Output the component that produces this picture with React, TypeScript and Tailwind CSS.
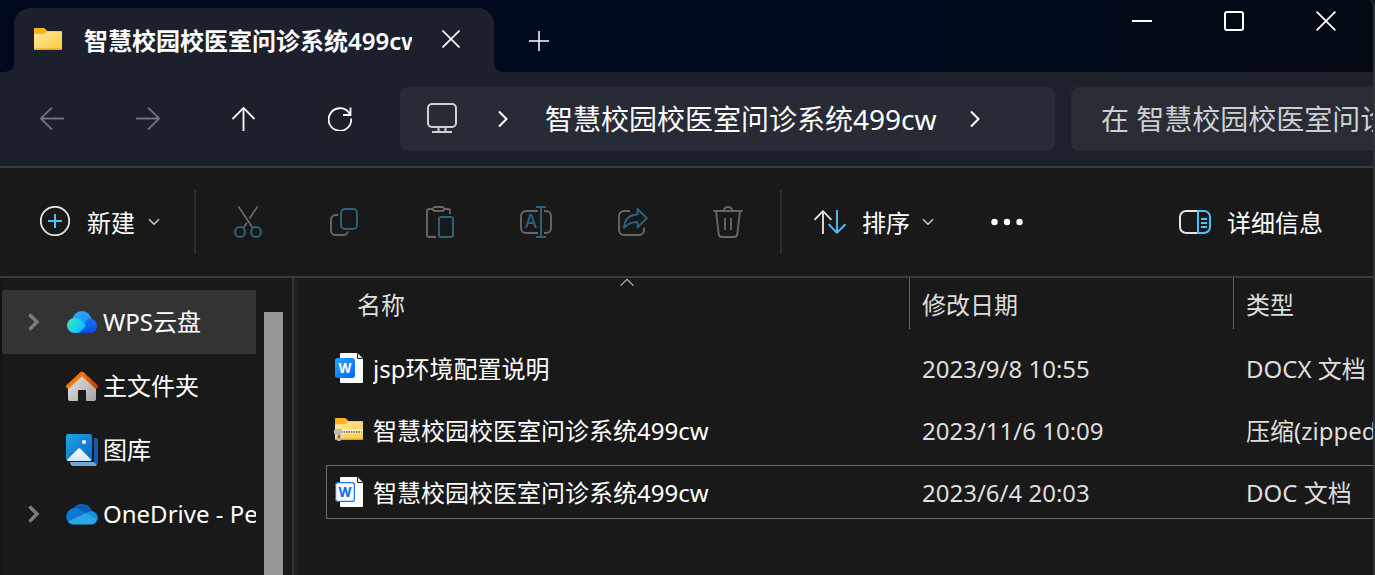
import type { ReactNode } from 'react';

type FileKind = 'docx' | 'zip' | 'doc';

interface FileItem {
  id: number;
  kind: FileKind;
  name: string;
  modified: string;
  type: string;
  focused?: boolean;
}

const files: FileItem[] = [
  { id: 1, kind: 'docx', name: 'jsp环境配置说明', modified: '2023/9/8 10:55', type: 'DOCX 文档' },
  { id: 2, kind: 'zip', name: '智慧校园校医室问诊系统499cw', modified: '2023/11/6 10:09', type: '压缩(zipped)文件夹' },
  { id: 3, kind: 'doc', name: '智慧校园校医室问诊系统499cw', modified: '2023/6/4 20:03', type: 'DOC 文档', focused: true },
];

const GRAY = '#676767';
const DIM_BLUE = '#2b6280';
const BLUE = '#4cc2ff';

function Chevron({ dir, className }: { dir: 'right' | 'down'; className?: string }) {
  return dir === 'right' ? (
    <svg width="12" height="18" viewBox="0 0 12 18" fill="none" stroke="currentColor" className={className}>
      <path d="M2 1.5 9.5 9 2 16.5" strokeWidth="2" />
    </svg>
  ) : (
    <svg width="12" height="8" viewBox="0 0 12 8" fill="none" stroke="currentColor" className={className}>
      <path d="M1 1.2 6 6.2 11 1.2" strokeWidth="1.5" />
    </svg>
  );
}

function CloseIcon({ size }: { size: number }) {
  return (
    <svg width={size} height={size} viewBox="0 0 20 20" fill="none" stroke="currentColor" strokeWidth="1.8">
      <path d="M.6.6l18.8 18.8M19.4.6.6 19.4" />
    </svg>
  );
}

function FolderIcon({ zipped }: { zipped?: boolean }) {
  const id = zipped ? 'folder-zip' : 'folder-plain';
  return (
    <svg width="28" height="24" viewBox="0 0 28 24" className="shrink-0 overflow-visible">
      <defs>
        <linearGradient id={id} x1="0" y1="0" x2="1" y2="1">
          <stop offset="0" stopColor="#ffe9a2" />
          <stop offset="1" stopColor="#ffca3e" />
        </linearGradient>
      </defs>
      <path d="M0 1a1 1 0 0 1 1-1h8.500q1 0 1.700.7L13.500 3H27a1 1 0 0 1 1 1v5H0z" fill="#fbb616" />
      <path d="M0 7q0-1 1-1h8.500q1 0 1.800-.8l1-.9q.8-.8 1.800-.8H27a1 1 0 0 1 1 1V21a1 1 0 0 1-1 1H1a1 1 0 0 1-1-1z" fill={`url(#${id})`} />
      <path d="M0 20.500V21q0 1 1 1h26q1 0 1-1v-.5z" fill="#e9a51c" />
      {zipped && (
        <g>
          <path d="M5 13.500h23" stroke="#fff6d8" strokeWidth="4" />
          <path d="M6 14h21" stroke="#84764f" strokeWidth="2" strokeDasharray="1.500 1" />
          <path d="M0 11h7v4h-1v7a1 1 0 0 1-1 1H3a1 1 0 0 1-1-1v-6H-1v-4z" fill="#b9b7b1" />
          <path d="M3 17h2v3H3z" fill="#6b6a66" />
        </g>
      )}
    </svg>
  );
}

function DocIcon({ filled }: { filled: boolean }) {
  return (
    <svg width="28" height="32" viewBox="0 0 28 32" className="shrink-0">
      <defs>
        <linearGradient id="doc-tile" x1="0" y1="0" x2="1" y2="1">
          <stop offset="0" stopColor="#23a6ff" />
          <stop offset="1" stopColor="#0a62ff" />
        </linearGradient>
      </defs>
      <path d="M6 1h16l6 6v23a1 1 0 0 1-1 1H6a1 1 0 0 1-1-1V2a1 1 0 0 1 1-1z" fill="#fff" />
      <path d="M22 1v5a1 1 0 0 0 1 1h5" fill="#1d2027" />
      <path d="M23 1.500 27.500 6H23z" fill="#e8ebf0" />
      {filled ? (
        <rect x="0" y="6" width="20" height="20" rx="3" fill="url(#doc-tile)" />
      ) : (
        <rect x=".6" y="6.600" width="18.800" height="18.800" rx="2.500" fill="#fff" stroke="#1a73f5" strokeWidth="1.200" />
      )}
      <text
        x="10"
        y="21"
        textAnchor="middle"
        fontFamily="Inter, sans-serif"
        fontWeight="700"
        fontSize="13"
        fill={filled ? '#fff' : '#1268f5'}
      >
        W
      </text>
    </svg>
  );
}

function FileIcon({ kind }: { kind: FileKind }) {
  if (kind === 'zip') return <FolderIcon zipped />;
  return <DocIcon filled={kind === 'docx'} />;
}

function WpsCloudIcon() {
  return (
    <svg width="32" height="22" viewBox="-1 0 32 22">
      <defs>
        <linearGradient id="wps-top" x1="0" y1="0" x2="1" y2="1">
          <stop offset="0" stopColor="#2fb4ff" />
          <stop offset="1" stopColor="#1580ff" />
        </linearGradient>
        <linearGradient id="wps-left" x1="0" y1="0" x2="1" y2=".7">
          <stop offset="0" stopColor="#3df0a8" />
          <stop offset=".8" stopColor="#12c5fb" />
        </linearGradient>
        <linearGradient id="wps-right" x1="0" y1="0" x2="0" y2="1">
          <stop offset="0" stopColor="#1173ff" />
          <stop offset="1" stopColor="#064fd6" />
        </linearGradient>
      </defs>
      <circle cx="15" cy="9.500" r="9.500" fill="url(#wps-top)" />
      <path d="M12 22 20 9q1.500-1.500 3-1.500A7.300 7.300 0 0 1 30 15q0 7-7.500 7z" fill="url(#wps-right)" />
      <path d="M7.500 22a7.500 7.500 0 0 1 0-15c3.500 0 5.500 1.500 7.500 3.500l4 4-5.500 6q-1.500 1.500-4 1.500z" fill="url(#wps-left)" />
    </svg>
  );
}

function HomeIcon() {
  return (
    <svg width="32" height="30" viewBox="0 0 32 30">
      <defs>
        <linearGradient id="home-wall" x1="0" y1="0" x2="1" y2="1">
          <stop offset="0" stopColor="#e6e6e6" />
          <stop offset="1" stopColor="#a5a5a5" />
        </linearGradient>
        <linearGradient id="home-roof" x1="0" y1="0" x2="1" y2="0">
          <stop offset="0" stopColor="#f07a10" />
          <stop offset=".55" stopColor="#ee7310" />
          <stop offset="1" stopColor="#cf3d05" />
        </linearGradient>
      </defs>
      <path d="M2 14 16 3l14 11v14a2 2 0 0 1-2 2h-7a1 1 0 0 1-1-1v-9a1 1 0 0 0-1-1h-6a1 1 0 0 0-1 1v9a1 1 0 0 1-1 1H4a2 2 0 0 1-2-2z" fill="url(#home-wall)" />
      <path d="M2 15.500 16 2.500l14 13" fill="none" stroke="url(#home-roof)" strokeWidth="4" strokeLinecap="round" strokeLinejoin="round" />
    </svg>
  );
}

function GalleryIcon() {
  return (
    <svg width="32" height="32" viewBox="0 0 32 32">
      <defs>
        <linearGradient id="gallery-front" x1="0" y1="0" x2="1" y2="1">
          <stop offset="0" stopColor="#1fa4e6" />
          <stop offset="1" stopColor="#0a66bd" />
        </linearGradient>
        <linearGradient id="gallery-hill" x1="0" y1="0" x2="0" y2="1">
          <stop offset="0" stopColor="#fff" />
          <stop offset="1" stopColor="#cfe6fb" />
        </linearGradient>
      </defs>
      <path d="M28 4h1.500A2.500 2.500 0 0 1 32 6.500V29l-2 2-2-3z" fill="#0c5db0" />
      <path d="M4 28h24l3 3q-1 1-2 1H7q-2.500 0-3-4z" fill="#6fa8dc" />
      <rect width="26" height="27" rx="2" fill="url(#gallery-front)" />
      <path d="M1 26 12 14.800q1.200-1 2.400 0L25.500 26q-.5 1-1.500 1H2.500Q1.500 27 1 26z" fill="url(#gallery-hill)" />
      <circle cx="18" cy="8" r="2" fill="#fff" />
    </svg>
  );
}

function OneDriveIcon() {
  return (
    <svg width="32" height="22" viewBox="0 0 32 22">
      <path d="M7 6a10.500 10.500 0 0 1 19 2.500L18 13z" fill="#0a5cb8" />
      <path d="M8 21.500A8 8 0 0 1 .8 10.500 8.500 8.500 0 0 1 13 6.200L23 12 12 21z" fill="#0f78d4" />
      <path d="M19 10.500q3-2.500 7-2.500a7 7 0 0 1 5.500 8.500L26 18z" fill="#1490df" />
      <path d="M2 18.500 20 10l11.300 6.700A7 7 0 0 1 25 21.500H8q-4 0-6-3z" fill="#28a8ea" />
    </svg>
  );
}

const places: { label: string; icon: ReactNode; expandable: boolean; current?: boolean }[] = [
  { label: 'WPS云盘', icon: <WpsCloudIcon />, expandable: true, current: true },
  { label: '主文件夹', icon: <HomeIcon />, expandable: false },
  { label: '图库', icon: <GalleryIcon />, expandable: false },
  { label: 'OneDrive - Personal', icon: <OneDriveIcon />, expandable: true },
];

const fileActions: { label: string; icon: ReactNode }[] = [
  {
    label: '剪切',
    icon: (
      <svg width="28" height="32" viewBox="0 0 28 32" fill="none" strokeWidth="2">
        <path d="M4.500.5 18.800 22M23.500.5l-8 12M13 16.500 9.300 22" stroke={GRAY} strokeWidth="1.800" />
        <circle cx="6" cy="26" r="5" stroke={DIM_BLUE} />
        <circle cx="22" cy="26" r="5" stroke={DIM_BLUE} />
      </svg>
    ),
  },
  {
    label: '复制',
    icon: (
      <svg width="28" height="28" viewBox="0 0 28 28" fill="none" strokeWidth="1.900">
        <path d="M8 7H5.500A4.500 4.500 0 0 0 1 11.500v11A4.500 4.500 0 0 0 5.500 27H13q4 0 5-3.500" stroke={GRAY} />
        <rect x="11" y="1" width="16" height="20" rx="4" stroke={DIM_BLUE} />
      </svg>
    ),
  },
  {
    label: '粘贴',
    icon: (
      <svg width="28" height="32" viewBox="0 0 28 32" fill="none" strokeWidth="1.900">
        <path d="M10 31H3a2 2 0 0 1-2-2V5a2 2 0 0 1 2-2h4M18 3h4a2 2 0 0 1 2 2v3" stroke={GRAY} />
        <rect x="7" y="1" width="11" height="4" rx="2" stroke={GRAY} />
        <rect x="13" y="11" width="14" height="20" rx="2" stroke={DIM_BLUE} />
      </svg>
    ),
  },
  {
    label: '重命名',
    icon: (
      <svg width="32" height="32" viewBox="0 0 32 32" fill="none" strokeWidth="1.900">
        <path d="M18 5H6a5 5 0 0 0-5 5v12a5 5 0 0 0 5 5h12M24 5h2a5 5 0 0 1 5 5v12a5 5 0 0 1-5 5h-2" stroke={GRAY} />
        <path d="M16 1h10M21 1v30M16 31h10" stroke={DIM_BLUE} strokeWidth="2" />
        <text x="11" y="22" textAnchor="middle" fontFamily="Inter, sans-serif" fontSize="18" fontWeight="500" fill={DIM_BLUE}>
          A
        </text>
      </svg>
    ),
  },
  {
    label: '共享',
    icon: (
      <svg width="28" height="30" viewBox="0 0 28 30" fill="none" strokeWidth="1.900" className="overflow-visible">
        <path d="M12 4H6a5 5 0 0 0-5 5v14a5 5 0 0 0 5 5h15a5 5 0 0 0 5-5v-2.500" stroke={GRAY} />
        <path d="M19.500 2 28.800 11.200 19.500 20.500V15C13 15 9.500 17 6 20.800 6.500 13 11 7.800 19.500 7.500Z" stroke={DIM_BLUE} strokeLinejoin="round" />
      </svg>
    ),
  },
  {
    label: '删除',
    icon: (
      <svg width="30" height="32" viewBox="0 0 30 32" fill="none" stroke={GRAY} strokeWidth="1.900">
        <path d="M.3 5h29.400M10.500 5a4.500 4 0 0 1 9 0M3 5l2.800 23.500a3 3 0 0 0 3 2.500h12.400a3 3 0 0 0 3-2.500L27 5M12 12v12M18 12v12" />
      </svg>
    ),
  },
];

function TitleBar() {
  return (
    <header className="flex h-[72px] items-start bg-linear-to-r from-[#00081c] via-[#000a20] to-[#020913]">
      <div className="relative mt-2 ml-3.5 flex h-16 w-[480px] items-center rounded-t-2xl bg-[#1b202c] pl-5">
        <span className="absolute bottom-0 -left-2 size-2 bg-[radial-gradient(circle_at_0_0,#00081c_7px,#1b202c_8px)]" />
        <span className="absolute -right-2 bottom-0 size-2 bg-[radial-gradient(circle_at_100%_0,#00081c_7px,#1b202c_8px)]" />
        <FolderIcon />
        <span className="ml-[22px] w-[328px] overflow-hidden pt-0.5 text-2xl font-semibold whitespace-nowrap">
          智慧校园校医室问诊系统499cw
        </span>
        <button type="button" aria-label="关闭标签页" className="flex h-full w-[78px] items-center justify-center pb-0.5">
          <CloseIcon size={18} />
        </button>
      </div>
      <button type="button" aria-label="新建标签页" className="mt-2 flex h-16 w-[90px] items-center justify-center pt-0.5">
        <svg width="20" height="20" viewBox="0 0 20 20" stroke="currentColor" strokeWidth="1.500">
          <path d="M10 0v20M0 10h20" />
        </svg>
      </button>
      <div className="mr-px ml-auto flex">
        <button type="button" aria-label="最小化" className="flex h-[42px] w-[92px] items-center justify-center">
          <span className="h-0.5 w-5 bg-white" />
        </button>
        <button type="button" aria-label="最大化" className="flex h-[42px] w-[92px] items-center justify-center">
          <span className="size-5 rounded-[3px] border-2 border-white" />
        </button>
        <button type="button" aria-label="关闭" className="flex h-[42px] w-[92px] items-center justify-center">
          <CloseIcon size={20} />
        </button>
      </div>
    </header>
  );
}

function NavButton({ label, disabled, children }: { label: string; disabled?: boolean; children: ReactNode }) {
  return (
    <button
      type="button"
      aria-label={label}
      disabled={disabled}
      className="flex h-16 w-24 items-center justify-center disabled:text-[#6d7179]"
    >
      <svg width="24" height="24" viewBox="0 0 24 24" fill="none" stroke="currentColor" strokeWidth="1.800">
        {children}
      </svg>
    </button>
  );
}

function AddressRow() {
  return (
    <div className="flex items-center border-b-2 border-[#3b3b3b] bg-linear-to-r from-[#1b202c] to-[#1c212a] py-[15px] pl-1">
      <NavButton label="后退" disabled>
        <path d="M24 11.500H1M12 .5.9 11.500 12 22.500" />
      </NavButton>
      <NavButton label="前进" disabled>
        <path d="M0 11.500h23M12 .5l11.100 11L12 22.500" />
      </NavButton>
      <NavButton label="向上">
        <path d="M11.500 24V1M.5 12l11-11.100L22.500 12" />
      </NavButton>
      <NavButton label="刷新">
        <path d="M23.200 11.500A11.300 11.300 0 1 1 20.800 5.500l1.500 2M22.500.5V8H15" />
      </NavButton>
      <div className="ml-3 flex h-16 min-w-0 flex-1 items-center rounded-lg bg-[#272b36] pl-[27px]">
        <svg width="30" height="32" viewBox="0 0 30 32" fill="none" stroke="#d0d1d4" strokeWidth="2" className="shrink-0">
          <rect x="1" y="1" width="28" height="23" rx="4" />
          <path d="M11.500 24v4.500M18.500 24v4.500M5 29h20" />
        </svg>
        <Chevron dir="right" className="ml-10 shrink-0" />
        <a href="#folder" className="ml-9 overflow-hidden text-[28px] leading-10 whitespace-nowrap">
          智慧校园校医室问诊系统499cw
        </a>
        <Chevron dir="right" className="ml-8 shrink-0" />
      </div>
      <input
        type="text"
        aria-label="搜索"
        placeholder="在 智慧校园校医室问诊系统499cw 中搜索"
        className="ml-4 h-16 w-[302px] rounded-l-lg bg-[#282c35] pl-[30px] text-[28px] outline-none placeholder:text-[#cdced0]"
      />
    </div>
  );
}

function Toolbar() {
  return (
    <div className="flex h-[110px] items-center border-b-2 border-[#3b3b3b] bg-[#191919]">
      <button type="button" className="flex h-16 w-[194px] items-center pl-[39px] text-2xl">
        <svg width="32" height="32" viewBox="0 0 32 32" fill="none">
          <circle cx="16" cy="15" r="14.200" stroke="#e4e4e4" strokeWidth="1.800" />
          <path d="M16 8v14M9 15h14" stroke={BLUE} strokeWidth="2" />
        </svg>
        <span className="ml-4 pt-0.5">新建</span>
        <Chevron dir="down" className="ml-[13px] text-[#cfcfcf]" />
      </button>
      <div className="h-16 w-0.5 bg-[#2c2c2c]" />
      <div className="flex px-1">
        {fileActions.map((a) => (
          <button key={a.label} type="button" aria-label={a.label} disabled className="flex h-16 w-24 items-center justify-center">
            {a.icon}
          </button>
        ))}
      </div>
      <div className="h-16 w-0.5 bg-[#2c2c2c]" />
      <button type="button" className="flex h-16 items-center pr-6 pl-8 text-2xl">
        <svg width="32" height="24" viewBox="0 0 32 24" fill="none" strokeWidth="1.900">
          <path d="M9 24V1.500M.6 9.800 9 1.200l8.400 8.600" stroke="#dedede" />
          <path d="M23 0v22.500M14.600 14.200 23 22.800l8.400-8.600" stroke={BLUE} />
        </svg>
        <span className="ml-4 pt-0.5">排序</span>
        <Chevron dir="down" className="ml-3 text-[#cfcfcf]" />
      </button>
      <button type="button" aria-label="查看更多" className="flex h-16 w-[98px] items-center justify-center">
        <svg width="32" height="8" viewBox="0 0 32 8" fill="#fff">
          <circle cx="3.500" cy="4" r="3.200" />
          <circle cx="16" cy="4" r="3.200" />
          <circle cx="28.500" cy="4" r="3.200" />
        </svg>
      </button>
      <button type="button" className="ml-auto flex h-16 items-center pr-[50px] text-2xl">
        <svg width="32" height="24" viewBox="0 0 32 24" fill="none" strokeWidth="2">
          <path d="M18 1H7a6 6 0 0 0-6 6v10a6 6 0 0 0 6 6h11" stroke="#e4e4e4" />
          <path d="M19 1h6a6 6 0 0 1 6 6v10a6 6 0 0 1-6 6h-6zM22 9h6M22 13h6M22 17h6" stroke={BLUE} />
        </svg>
        <span className="ml-4 pt-0.5">详细信息</span>
      </button>
    </div>
  );
}

function Sidebar() {
  return (
    <aside className="flex shrink-0 border-l-2 border-[#131313]">
      <nav className="w-[254px] pt-3">
        {places.map((p) => (
          <a
            key={p.label}
            href="#place"
            aria-current={p.current ? 'page' : undefined}
            className="flex h-16 items-center overflow-hidden rounded-xs text-2xl whitespace-nowrap aria-[current=page]:bg-[#333333]"
          >
            <span className="flex w-16 shrink-0 justify-center text-[#7b7b7b]">
              {p.expandable && (
                <svg width="12" height="18" viewBox="0 0 12 18" fill="none" stroke="currentColor" strokeWidth="3.500">
                  <path d="M1.500 1.500 9 9l-7.500 7.500" />
                </svg>
              )}
            </span>
            <span className="shrink-0">{p.icon}</span>
            <span className="ml-[5px]">{p.label}</span>
          </a>
        ))}
      </nav>
      <div className="mt-[34px] ml-2 w-[19px] bg-[#969696]" />
      <div className="ml-[9px] w-1.5 border-l-2 border-[#333333] bg-[#1f1f1f]" />
    </aside>
  );
}

function FileTable() {
  return (
    <main className="min-w-0 flex-1 overflow-hidden pl-7">
      <table className="w-full table-fixed text-left text-2xl whitespace-nowrap">
        <thead className="text-[#dedede]">
          <tr className="h-[59px] align-top">
            <th className="p-0 font-normal">
              <button type="button" className="relative ml-[19px] flex h-[51px] w-[calc(100%-19px)] items-center pt-0.5 pl-3">
                <svg
                  width="14"
                  height="8"
                  viewBox="0 0 14 8"
                  fill="none"
                  stroke="#bdbdbd"
                  className="absolute top-0 left-1/2 -translate-x-1/2"
                >
                  <path d="M.5 7.800 7 1.300l6.500 6.500" strokeWidth="1.100" />
                </svg>
                名称
              </button>
            </th>
            <th className="w-[324px] p-0 font-normal">
              <button type="button" className="flex h-[51px] w-full items-center border-l border-[#636363] pt-0.5 pl-3">
                修改日期
              </button>
            </th>
            <th className="w-[140px] p-0 font-normal">
              <button type="button" className="flex h-[51px] w-full items-center border-l border-[#636363] pt-0.5 pl-3">
                类型
              </button>
            </th>
          </tr>
        </thead>
        <tbody>
          {files.map((f) => {
            const border = f.focused ? 'border-[#6a6a6a]' : 'border-transparent';
            return (
              <tr key={f.id}>
                <td className="px-0 py-1">
                  <div className={`flex h-[54px] items-center gap-2.5 border-y border-l pl-2 ${border}`}>
                    <FileIcon kind={f.kind} />
                    <span className="overflow-hidden pt-0.5 text-ellipsis">{f.name}</span>
                  </div>
                </td>
                <td className="px-0 py-1 text-[#dedede]">
                  <div className={`flex h-[54px] items-center border-y pt-0.5 pl-[13px] ${border}`}>{f.modified}</div>
                </td>
                <td className="px-0 py-1 text-[#dedede]">
                  <div className={`flex h-[54px] items-center overflow-hidden border-y pt-0.5 pl-[13px] ${border}`}>{f.type}</div>
                </td>
              </tr>
            );
          })}
        </tbody>
      </table>
    </main>
  );
}

export default function App() {
  return (
    <div className="bg-[#191919]">
      <div className="flex min-h-screen flex-col overflow-hidden rounded-tr-lg border-r-2 border-[#2e323b] bg-[#191919] font-['Noto_Sans','Noto_Sans_CJK_SC',sans-serif] text-white">
        <TitleBar />
        <AddressRow />
        <Toolbar />
        <div className="flex flex-1">
          <Sidebar />
          <FileTable />
        </div>
      </div>
    </div>
  );
}
